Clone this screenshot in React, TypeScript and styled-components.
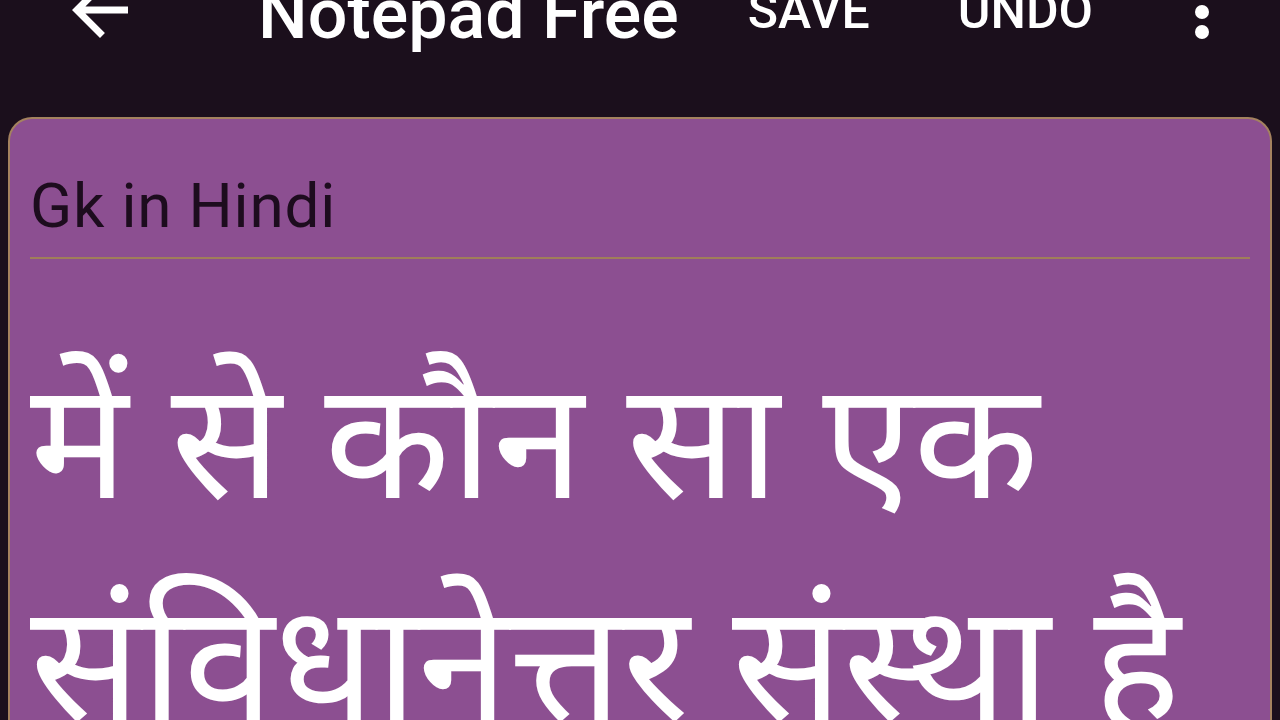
import React from 'react';
import styled, { createGlobalStyle } from 'styled-components';

const GlobalStyle = createGlobalStyle`
  html, body {
    margin: 0;
    padding: 0;
    background: #1b0f1c;
    overflow: hidden;
  }
  body {
    font-family: Roboto, "Noto Sans", "Noto Sans Devanagari", sans-serif;
  }
`;

const Screen = styled.div`
  width: 1280px;
  height: 720px;
  background: #1b0f1c;
  display: flex;
  flex-direction: column;
  overflow: hidden;
`;

const Toolbar = styled.div`
  height: 117px;
  display: flex;
  align-items: flex-start;
  color: #ffffff;
  flex-shrink: 0;
`;

const IconButton = styled.div<{ $width: number; $shift: number }>`
  width: ${(p) => p.$width}px;
  height: 40px;
  display: flex;
  justify-content: center;
  align-items: flex-start;
  margin-top: ${(p) => p.$shift}px;
`;

const Title = styled.div`
  font-size: 70px;
  font-weight: 500;
  line-height: 70px;
  margin-top: -21px;
  margin-left: 58px;
  flex: 1;
`;

const Action = styled.div<{ $gap: number }>`
  font-size: 50px;
  font-weight: 500;
  line-height: 50px;
  margin-top: -14px;
  margin-right: ${(p) => p.$gap}px;
`;

const Card = styled.div`
  margin: 0 8px;
  flex: 1;
  background: #8c4f91;
  border: 2px solid #a4825f;
  border-bottom: none;
  border-radius: 24px 24px 0 0;
  padding: 0 20px;
  display: flex;
  flex-direction: column;
`;

const NoteTitle = styled.div`
  font-size: 62px;
  letter-spacing: 0.8px;
  color: #1d0c1e;
  line-height: 70px;
  padding-top: 52px;
  padding-bottom: 16px;
  border-bottom: 2px solid #a07e5a;
`;

const NoteBody = styled.div`
  font-family: "Noto Sans Devanagari", "Noto Sans", "Lohit Devanagari", sans-serif;
  font-size: 164px;
  line-height: 222px;
  color: #ffffff;
  padding-top: 88px;
  white-space: pre-wrap;
`;

const BackArrow = () => (
  <svg width="84" height="84" viewBox="0 0 24 24">
    <path d="M20 11H7.83l5.59-5.59L12 4l-8 8 8 8 1.41-1.41L7.83 13H20v-2z" fill="#fff" />
  </svg>
);

const MoreDots = () => (
  <svg width="20" height="44" viewBox="0 0 20 44">
    <circle cx="10" cy="12" r="7" fill="#fff" />
    <circle cx="10" cy="32" r="7" fill="#fff" />
  </svg>
);

export default function App() {
  return (
    <Screen>
      <GlobalStyle />
      <Toolbar>
        <IconButton $width={200} $shift={-32}>
          <BackArrow />
        </IconButton>
        <Title>Notepad Free</Title>
        <Action $gap={88}>SAVE</Action>
        <Action $gap={31}>UNDO</Action>
        <IconButton $width={156} $shift={0}>
          <MoreDots />
        </IconButton>
      </Toolbar>
      <Card>
        <NoteTitle>Gk in Hindi</NoteTitle>
        <NoteBody>में से कौन सा एक संविधानेत्तर संस्था है</NoteBody>
      </Card>
    </Screen>
  );
}
